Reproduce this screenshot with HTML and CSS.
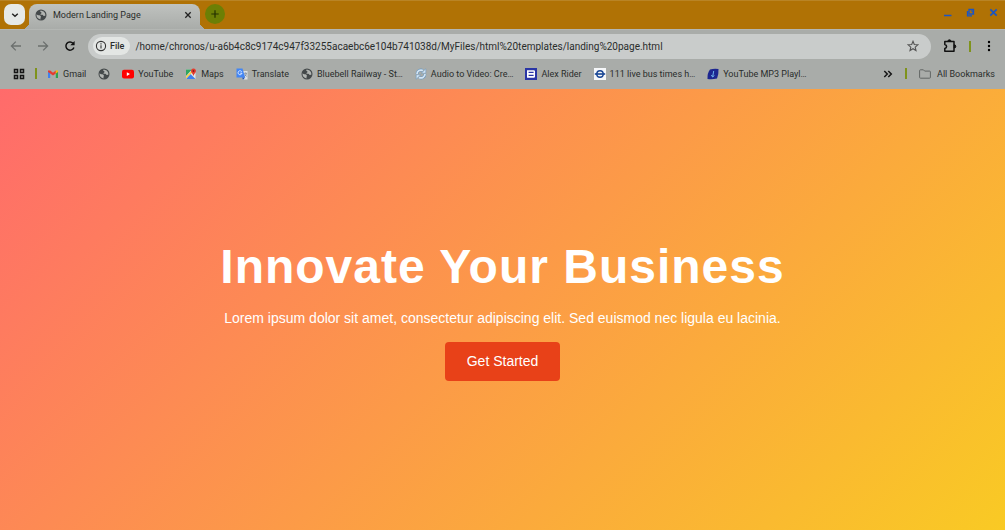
FILE: index.html
```
<!DOCTYPE html>
<html lang="en">
<head>
	<meta charset="UTF-8">
	<title>Modern Landing Page</title>
	<link rel="stylesheet" href="styles.css">
</head>
<body>
	<!-- shared icons -->
	<svg class="sprite" aria-hidden="true">
		<symbol id="globe" viewBox="0 0 12 12">
			<circle cx="6" cy="6" r="5.5" fill="#44494a"/>
			<path d="M1.5 5.2 C3 7 5 5.6 5.7 7 C6.2 8.2 5.3 8.5 5.5 10.4 C3 10 1.2 8 1.5 5.2Z M5 1.7 C5 3 6.6 2.8 6.5 4 C6.4 5 5.1 4.7 5.5 5.8 C7 5.4 8.3 5.8 8.5 7 L10.3 6.8 C10.8 3.5 8.2 1.2 5 1.7Z" fill="#b2b5b2"/>
		</symbol>
	</svg>

	<header class="browser">
		<div class="tabs">
			<button class="tab-search" aria-label="Search tabs">
				<svg width="10" height="10" viewBox="0 0 10 10"><path d="M2.2 3.7 L5 6.3 L7.8 3.7" fill="none" stroke="#222" stroke-width="1.4"/></svg>
			</button>
			<div class="tab">
				<svg width="12" height="12"><use href="#globe"/></svg>
				<span class="tab-title">Modern Landing Page</span>
				<button aria-label="Close tab">
					<svg width="8" height="8" viewBox="0 0 8 8"><path d="M1.3 1.3 L6.7 6.7 M6.7 1.3 L1.3 6.7" stroke="#222" stroke-width="1.3"/></svg>
				</button>
			</div>
			<button class="new-tab" aria-label="New tab">
				<svg width="10" height="10" viewBox="0 0 10 10"><path d="M5 1.3 V8.7 M1.3 5 H8.7" stroke="#243000" stroke-width="1.2"/></svg>
			</button>
			<div class="window-btns">
				<button aria-label="Minimize">
					<svg width="9" height="9" viewBox="0 0 9 9"><path d="M1 7.5 H8.5" stroke="#1a55c4" stroke-width="1.5"/></svg>
				</button>
				<button aria-label="Restore">
					<svg width="9" height="9" viewBox="0 0 9 9"><path d="M3 1.5 H7.5 V6 H3Z M1.5 3 V7.8 H6" fill="none" stroke="#1a55c4" stroke-width="1.3"/><path d="M5 3 H7 V5" fill="none" stroke="#1a55c4"/></svg>
				</button>
				<button aria-label="Close">
					<svg width="9" height="9" viewBox="0 0 9 9"><path d="M1.3 1.3 L7.7 7.7 M7.7 1.3 L1.3 7.7" stroke="#1a55c4" stroke-width="1.7"/></svg>
				</button>
			</div>
		</div>

		<div class="toolbar">
			<div class="nav-btns">
				<button aria-label="Back">
					<svg width="12" height="12" viewBox="0 0 12 12"><path d="M11 6 H1.6 M5.8 1.6 L1.4 6 L5.8 10.4" fill="none" stroke="#6c706e" stroke-width="1.3"/></svg>
				</button>
				<button aria-label="Forward">
					<svg width="12" height="12" viewBox="0 0 12 12"><path d="M1 6 H10.4 M6.2 1.6 L10.6 6 L6.2 10.4" fill="none" stroke="#6c706e" stroke-width="1.3"/></svg>
				</button>
				<button aria-label="Reload">
					<svg width="12" height="12" viewBox="0 0 12 12"><path d="M9 3.2 A4.1 4.1 0 1 0 9.9 7.4" fill="none" stroke="#111" stroke-width="1.5"/><path d="M10.6 1 V5.3 H6.3Z" fill="#111"/></svg>
				</button>
			</div>
			<div class="address">
				<button class="chip">
					<svg width="12" height="12" viewBox="0 0 12 12"><circle cx="6" cy="6" r="4.6" fill="none" stroke="#333" stroke-width="1.1"/><path d="M6 5.3 V8.6 M6 3.3 V4.4" stroke="#333" stroke-width="1.1"/></svg>
					File
				</button>
				<input type="text" aria-label="Address" value="/home/chronos/u-a6b4c8c9174c947f33255acaebc6e104b741038d/MyFiles/html%20templates/landing%20page.html">
				<button aria-label="Bookmark this page">
					<svg width="12" height="12" viewBox="0 0 12 12"><path d="M6 1.3 L7.3 4.5 L10.8 4.8 L8.2 7.1 L9 10.5 L6 8.7 L3 10.5 L3.8 7.1 L1.2 4.8 L4.7 4.5Z" fill="none" stroke="#555" stroke-width="1.1"/></svg>
				</button>
			</div>
			<button aria-label="Extensions">
				<svg width="14" height="14" viewBox="0 0 14 14"><path d="M1.8 2.6 H11 V12.2 H1.8 V9.6 C4.2 9 4.2 6 1.8 5.4Z" fill="none" stroke="#111" stroke-width="1.5" stroke-linejoin="round"/><path d="M4.8 2.4 A1.6 1.6 0 0 1 8 2.4Z M11.2 5.8 A1.6 1.6 0 0 1 11.2 9Z" fill="#111" stroke="#111"/></svg>
			</button>
			<span class="divider"></span>
			<button aria-label="Menu">
				<svg width="12" height="12" viewBox="0 0 12 12"><circle cx="6" cy="2" r="1.2"/><circle cx="6" cy="6" r="1.2"/><circle cx="6" cy="10" r="1.2"/></svg>
			</button>
		</div>

		<nav class="bookmarks">
			<button aria-label="Apps">
				<svg width="12" height="12" viewBox="0 0 12 12"><path d="M1.5 1.5 H4.5 V4.5 H1.5Z M7.5 1.5 H10.5 V4.5 H7.5Z M1.5 7.5 H4.5 V10.5 H1.5Z M7.5 7.5 H10.5 V10.5 H7.5Z" fill="none" stroke="#161616" stroke-width="1.5"/></svg>
			</button>
			<span class="divider"></span>
			<div class="links">
				<a href="#">
					<svg width="12" height="12" viewBox="0 0 12 12"><path d="M1 3 V10 H3.2 V5Z" fill="#3f80ee"/><path d="M11 3 V10 H8.8 V5Z" fill="#2ea34f"/><path d="M1 2.5 L3.2 2.6 L6 4.8 L8.8 2.6 V5.4 L6 7.6 L3.2 5.4 V5.6 L1 4Z" fill="#e63a2e"/><path d="M8.8 2.6 Q11 1.4 11 3.5 V4 L8.8 5.6Z" fill="#f7b90b"/></svg>
					Gmail
				</a>
				<a href="#" aria-label="Bookmark">
					<svg width="12" height="12"><use href="#globe"/></svg>
				</a>
				<a href="#">
					<svg width="12" height="12" viewBox="0 0 12 12"><rect y="1.8" width="12" height="8.6" rx="2" fill="#f00"/><path d="M4.8 4.2 L8 6.1 L4.8 8Z" fill="#fff"/></svg>
					YouTube
				</a>
				<a href="#">
					<svg width="12" height="12" viewBox="0 0 12 12"><path d="M1 1.5 H10.5 V11 H1Z" fill="#e4e6e4"/><path d="M1 1.5 H7 L1 8Z" fill="#32a561"/><path d="M1 11 L5.5 6 L10.5 11Z" fill="#3f80ee"/><path d="M1 8.5 L7.5 2 L8.5 3.2 L1 10.8Z" fill="#f8d043"/><path d="M6 3 A2.5 2.5 0 0 1 11 3 C11 5 9 5.5 8.5 8 C8 5.5 6 5 6 3Z" fill="#e33b2e"/><circle cx="8.5" cy="3" r=".9" fill="#831f1a"/></svg>
					Maps
				</a>
				<a href="#">
					<svg width="12" height="12" viewBox="0 0 12 12"><path d="M4 3 H11.5 V11.5 H7Z" fill="#dfe2e4"/><path d="M.5 .5 H6.5 L9.2 9.5 H.5Z" fill="#4285f4"/><path d="M6 9.5 H9.2 L7 11.7Z" fill="#174fb8"/><path d="M5.8 3.8 A2 2 0 1 0 6 5.2 H4.2" fill="none" stroke="#e6efff" stroke-width=".9"/><path d="M8 5.3 H11 M9.5 4.5 V5.3 M10.5 5.5 Q10 7.5 8.7 8.3 M8.7 6.2 L10.7 8.6" fill="none" stroke="#6b7c91" stroke-width=".7"/></svg>
					Translate
				</a>
				<a href="#">
					<svg width="12" height="12"><use href="#globe"/></svg>
					Bluebell Railway - St…
				</a>
				<a href="#">
					<svg width="12" height="12" viewBox="0 0 12 12"><path d="M2 6 A4 4 0 0 1 8 2.6 M10 6 A4 4 0 0 1 4 9.4" fill="none" stroke="#6c98bf" stroke-width="2.8"/><path d="M2 6 A4 4 0 0 1 8 2.6 M10 6 A4 4 0 0 1 4 9.4" fill="none" stroke="#d5e6f4" stroke-width="1.7"/><path d="M10.8 .8 V5.2 H6.4Z M1.2 11.2 V6.8 H5.6Z" fill="#d5e6f4" stroke="#6c98bf" stroke-width=".6"/></svg>
					Audio to Video: Cre…
				</a>
				<a href="#">
					<svg width="12" height="12" viewBox="0 0 12 12"><rect width="12" height="12" fill="#2a35a5"/><path d="M2 2.2 H9.2 L10 3 V9 L9.2 9.8 H2Z" fill="#fff"/><path d="M3.6 4.4 H8.6 M3.6 7.4 H8.6" stroke="#2a35a5" stroke-width="1.2"/></svg>
					Alex Rider
				</a>
				<a href="#">
					<svg width="12" height="12" viewBox="0 0 12 12"><rect width="12" height="12" fill="#f5f7f9"/><circle cx="6" cy="6" r="3.2" fill="none" stroke="#164494" stroke-width="1.4"/><path d="M.8 6 H11.2" stroke="#164494" stroke-width="1.6"/></svg>
					111 live bus times h…
				</a>
				<a href="#">
					<svg width="12" height="12" viewBox="0 0 12 12"><path d="M3 1.5 Q7 .3 11.5 1 Q11.8 6 10 10.5 Q5 11.8 .5 11 Q.2 5 3 1.5Z" fill="#1c2690"/><path d="M6.7 3 L5.7 8.7 M4.4 7 L5.6 9 L7.4 7.5" fill="none" stroke="#6fb3ee" stroke-width="1"/></svg>
					YouTube MP3 Playl…
				</a>
			</div>
			<div class="links right">
				<button aria-label="More bookmarks">
					<svg width="10" height="10" viewBox="0 0 10 10"><path d="M1.3 2 L4.3 5 L1.3 8 M5.3 2 L8.3 5 L5.3 8" fill="none" stroke="#161616" stroke-width="1.5"/></svg>
				</button>
				<span class="divider"></span>
				<a href="#">
					<svg width="12" height="12" viewBox="0 0 12 12"><path d="M.6 9.4 V2.6 Q.6 1.8 1.4 1.8 H4.4 L5.7 3.1 H10.6 Q11.4 3.1 11.4 3.9 V9.4 Q11.4 10.2 10.6 10.2 H1.4 Q.6 10.2 .6 9.4Z" fill="none" stroke="#626664" stroke-width="1"/></svg>
					All Bookmarks
				</a>
			</div>
		</nav>
	</header>

	<main class="hero">
		<h1>Innovate Your Business</h1>
		<p>Lorem ipsum dolor sit amet, consectetur adipiscing elit. Sed euismod nec ligula eu lacinia.</p>
		<a href="#" class="btn">Get Started</a>
	</main>
</body>
</html>
```
FILE: styles.css
```
*{
	margin: 0;
	padding: 0;
	box-sizing: border-box;
}
body{
	min-height: 100vh;
	display: flex;
	flex-direction: column;
	font-family: "Liberation Sans", Arial, sans-serif;
}
a{
	color: inherit;
	text-decoration: none;
}
button{
	display: flex;
	align-items: center;
	justify-content: center;
	border: none;
	background: none;
	color: inherit;
	font: inherit;
	cursor: pointer;
}
svg{
	display: block;
	flex: none;
}
.sprite{
	display: none;
}

/* browser frame */
.browser{
	background: #a9aca9;
	color: #292d2b;
	font-family: Roboto, sans-serif;
	font-size: 9px;
}
.tabs{
	display: flex;
	align-items: flex-start;
	height: 29px;
	padding: 3px 7px 0 4px;
	background: #b07205;
	border-top: 1px solid #b98425;
}
.tab-search{
	width: 21px;
	height: 21px;
	border-radius: 7px;
	background: #e6e9e7;
}
.tab{
	position: relative;
	display: flex;
	align-items: center;
	gap: 6px;
	width: 171px;
	height: 25px;
	margin-left: 4px;
	padding: 0 8px 4px 6px;
	border-radius: 8px 8px 0 0;
	background: linear-gradient(#bfc2bf, #a9aca9);
}
/* curved feet of the tab */
.tab:before,
.tab:after{
	content: "";
	position: absolute;
	bottom: 0;
	width: 7px;
	height: 7px;
}
.tab:before{
	right: 100%;
	background: radial-gradient(circle at 0 0, transparent 7px, #a9aca9 7px);
}
.tab:after{
	left: 100%;
	background: radial-gradient(circle at 100% 0, transparent 7px, #a9aca9 7px);
}
.tab-title{
	flex: 1;
}
.new-tab{
	width: 20px;
	height: 20px;
	margin-left: 5px;
	border-radius: 50%;
	background: #6c7f05;
}
.window-btns{
	display: flex;
	gap: 14px;
	margin-left: auto;
	padding-top: 4px;
}

.toolbar{
	display: flex;
	align-items: center;
	gap: 12px;
	height: 33px;
	padding: 0 10px;
	border-top: 1px solid #b3b6b3;
}
.nav-btns{
	display: flex;
	gap: 15px;
}
.address{
	flex: 1;
	display: flex;
	align-items: center;
	height: 25px;
	padding: 0 12px 0 5px;
	border-radius: 13px;
	background: #c9cccb;
}
.chip{
	gap: 3px;
	height: 18px;
	padding: 0 6px 0 2px;
	border-radius: 9px;
	background: #e3e6e4;
	font-weight: 500;
}
.address input{
	flex: 1;
	min-width: 0;
	margin-left: 5px;
	border: none;
	outline: none;
	background: none;
	color: #292d2b;
	font-family: inherit;
	font-size: 10px;
}
.divider{
	width: 2px;
	height: 11px;
	background: #7f931c;
}

.bookmarks{
	display: flex;
	align-items: center;
	gap: 10px;
	height: 27px;
	padding: 0 10px 4px 13px;
	white-space: nowrap;
}
.links{
	display: flex;
	align-items: center;
	gap: 12px;
}
.links a{
	display: flex;
	align-items: center;
	gap: 4px;
}
.right{
	margin-left: auto;
}
.right a{
	gap: 6px;
}

/* landing page */
.hero{
	flex: 1;
	display: flex;
	flex-direction: column;
	align-items: center;
	justify-content: center;
	background: linear-gradient(135deg, #ff6b6b, #f9ca24);
	color: #fff;
	text-align: center;
}
.hero h1{
	font-size: 48px;
	line-height: 58px;
	letter-spacing: 1px;
	margin-bottom: 12px;
}
.hero p{
	font-size: 14px;
	line-height: 20px;
	margin-bottom: 14px;
}
.btn{
	padding: 11px 22px;
	border-radius: 4px;
	background: #e84118;
	font-size: 14px;
	line-height: 17px;
}
```
